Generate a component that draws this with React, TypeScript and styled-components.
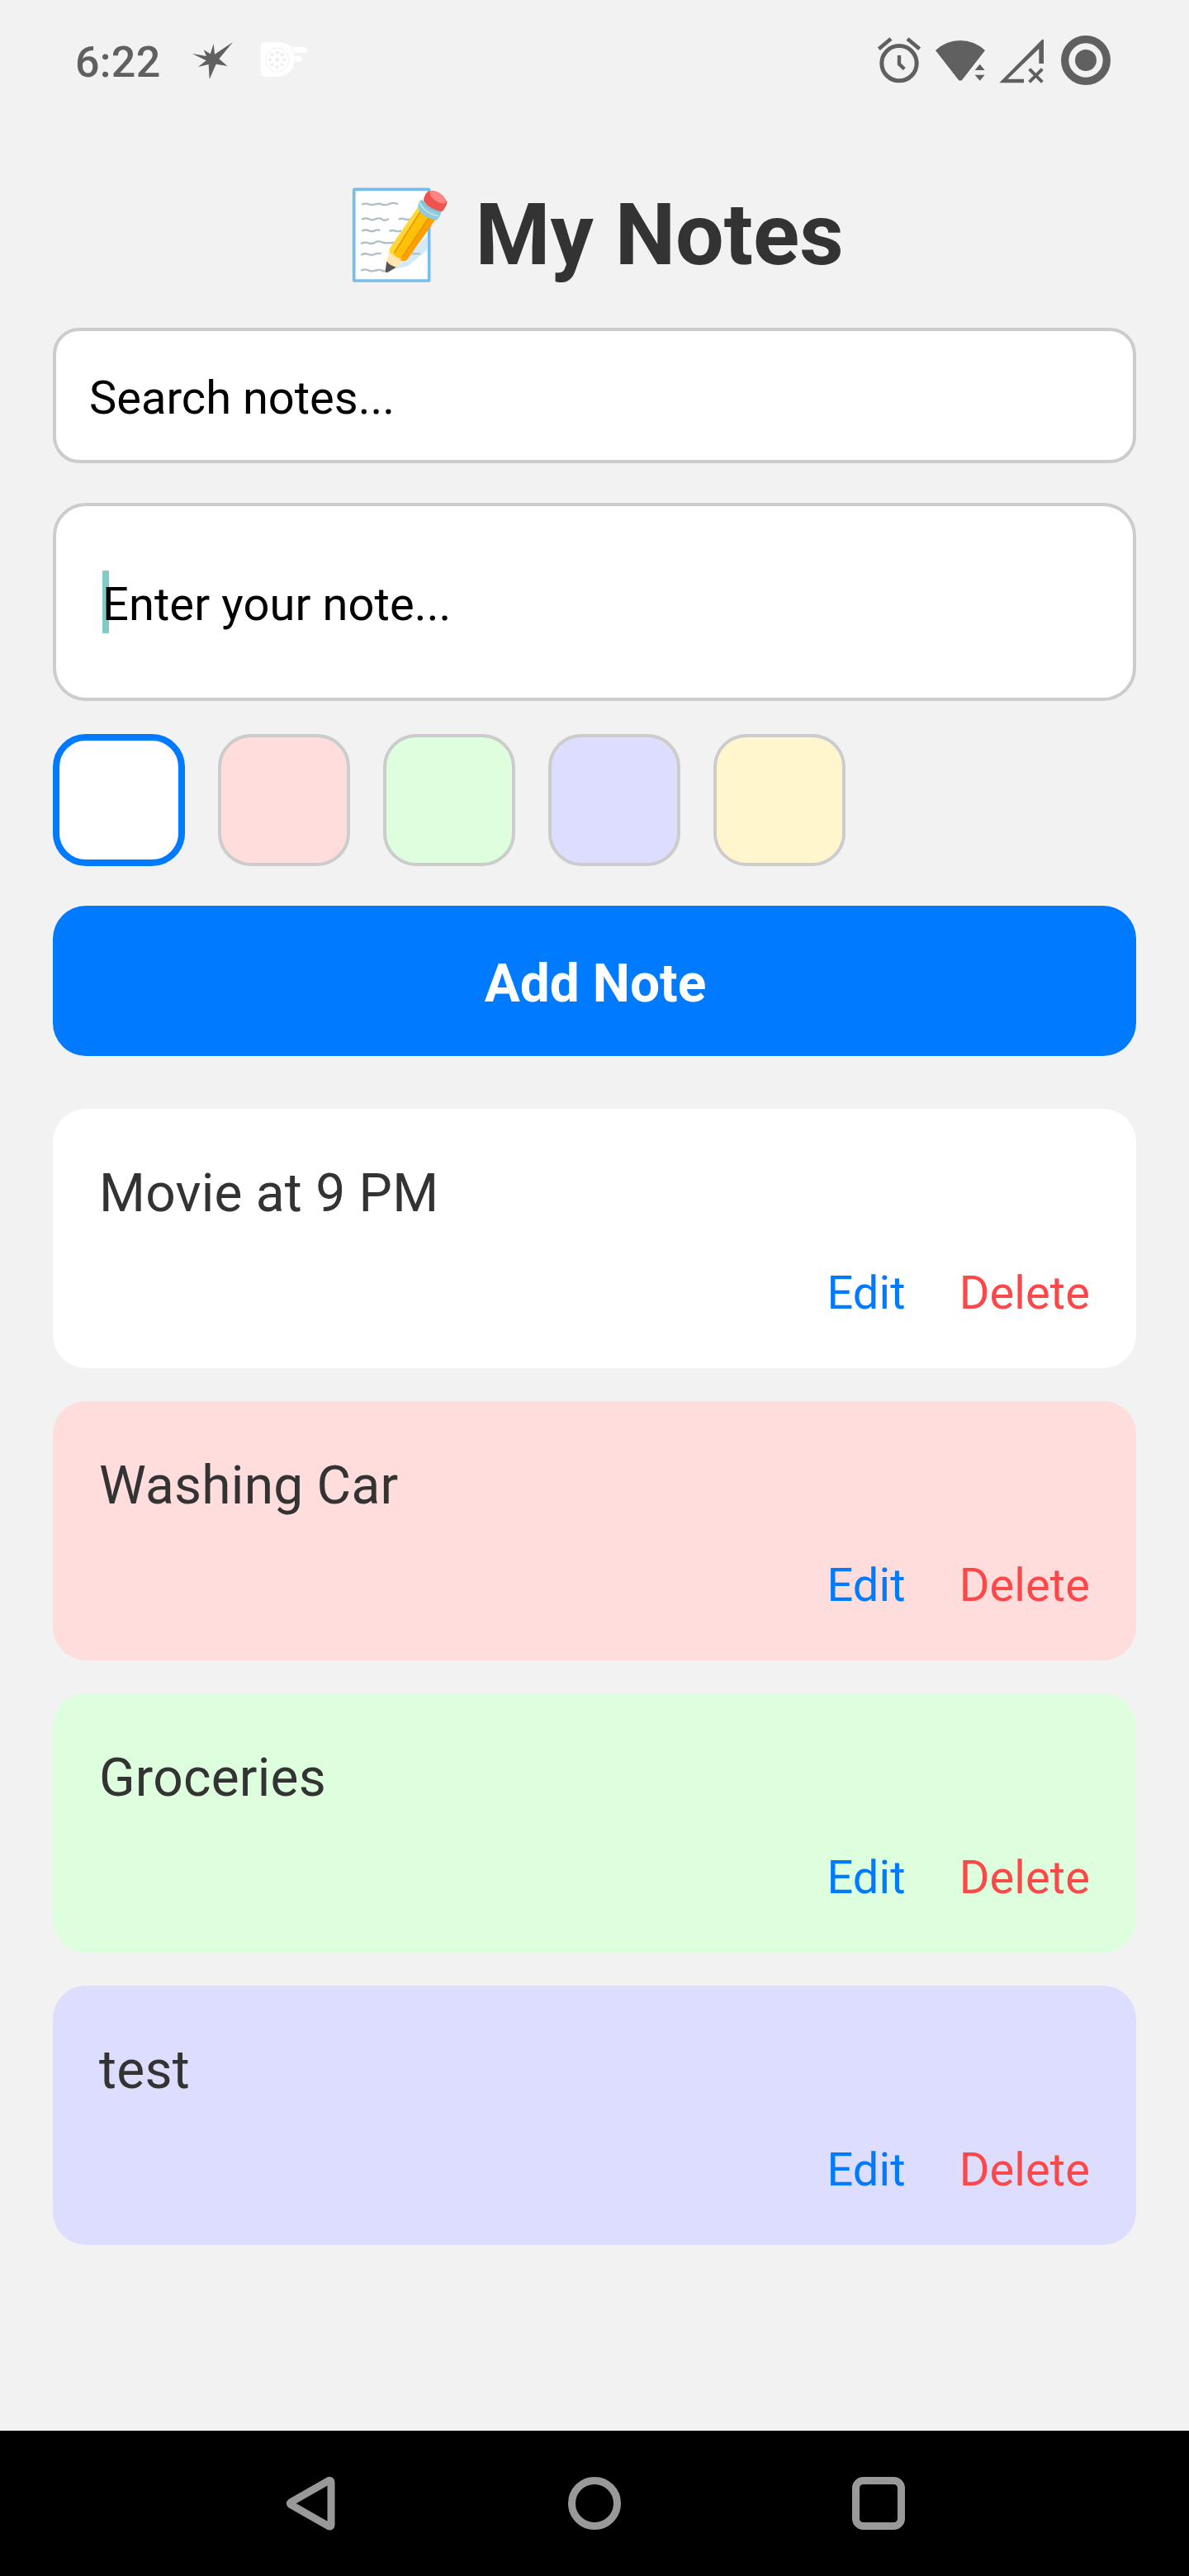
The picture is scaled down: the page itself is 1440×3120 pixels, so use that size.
import React from "react";
import styled, { createGlobalStyle } from "styled-components";

const GlobalStyle = createGlobalStyle`
  *, *::before, *::after { box-sizing: border-box; }
  body { margin: 0; background: #f2f2f2; }
`;

const ICON = "#606060";

const Screen = styled.div`
  display: flex;
  flex-direction: column;
  width: 1440px;
  height: 3120px;
  background: #f2f2f2;
  font-family: Roboto, "Noto Sans", sans-serif;
  overflow: hidden;
`;

const StatusBar = styled.header`
  display: flex;
  align-items: center;
  justify-content: space-between;
  height: 146px;
  padding: 0 94px 0 91px;
  flex: none;
`;

const StatusGroup = styled.div<{ $gap: number }>`
  display: flex;
  align-items: center;
  gap: ${(p) => p.$gap}px;
`;

const Clock = styled.span`
  width: 109px;
  padding-top: 6px;
  font-size: 52px;
  font-weight: 500;
  line-height: 62px;
  letter-spacing: 0.3px;
  color: ${ICON};
  white-space: nowrap;
`;

const Glyph = styled.svg<{ $w: number; $h?: number }>`
  display: block;
  flex: none;
  width: ${(p) => p.$w}px;
  height: ${(p) => p.$h ?? 62}px;
`;

const Body = styled.main`
  display: flex;
  flex-direction: column;
  flex: 1;
  padding: 81px 64px 0;
`;

const Title = styled.h1`
  display: flex;
  align-items: center;
  justify-content: center;
  gap: 33px;
  height: 116px;
  margin: 0 0 54px;
  padding-left: 8px;
  font-size: 104px;
  font-weight: 700;
  line-height: 116px;
  color: #333;
  white-space: nowrap;
`;

const Form = styled.section`
  display: flex;
  flex-direction: column;
  gap: 48px;
`;

const Field = styled.div<{ $height: number; $radius: number; $inset: number }>`
  display: flex;
  align-items: center;
  height: ${(p) => p.$height}px;
  padding: 5px ${(p) => p.$inset}px 0;
  border: 4px solid #ccc;
  border-radius: ${(p) => p.$radius}px;
  background: #fff;
  font-size: 56px;
  line-height: 76px;
  color: #000;
`;

const Placeholder = styled.span`
  position: relative;
  white-space: nowrap;
`;

const Caret = styled.i`
  position: absolute;
  left: 0;
  top: -3px;
  width: 8px;
  height: 76px;
  background: #80cbc4;
`;

const CaretText = styled.span`
  position: relative;
  letter-spacing: 0.1px;
`;

const Swatches = styled.div`
  display: flex;
  gap: 40px;
  margin-top: -8px;
`;

const Swatch = styled.button<{ $color: string; $active?: boolean }>`
  width: 160px;
  height: 160px;
  padding: 0;
  border: ${(p) => (p.$active ? "8px solid #007bff" : "4px solid #ccc")};
  border-radius: 40px;
  background: ${(p) => p.$color};
`;

const AddButton = styled.button`
  height: 182px;
  padding: 8px 0 0 2px;
  border: 0;
  border-radius: 40px;
  background: #007bff;
  color: #fff;
  font-family: inherit;
  font-size: 64px;
  font-weight: 700;
  line-height: 86px;
`;

const List = styled.ul`
  display: flex;
  flex-direction: column;
  gap: 40px;
  margin: 64px 0 0;
  padding: 0;
  list-style: none;
`;

const Card = styled.li<{ $color: string }>`
  display: flex;
  flex-direction: column;
  height: 314px;
  padding: 60px 56px 0;
  border-radius: 40px;
  background: ${(p) => p.$color};
`;

const NoteText = styled.p`
  margin: 0;
  font-size: 64px;
  line-height: 86px;
  letter-spacing: 0.25px;
  color: #333;
`;

const Actions = styled.div`
  display: flex;
  justify-content: flex-end;
  gap: 65px;
  margin-top: 40px;
`;

const Action = styled.button<{ $color: string }>`
  padding: 0;
  border: 0;
  background: none;
  font-family: inherit;
  font-size: 56px;
  line-height: 74px;
  letter-spacing: 0.1px;
  color: ${(p) => p.$color};
`;

const NavBar = styled.nav`
  display: flex;
  align-items: center;
  justify-content: center;
  gap: 280px;
  height: 176px;
  padding-right: 1px;
  flex: none;
  background: #000;
`;

const StarIcon = () => (
  <Glyph $w={51} viewBox="516 66 153 186">
    <path
      fill={ICON}
      d="M518 135 L570 144 L560 121 L584 136 L596 99 L600 137 L666 93 L616 154 L646 180 L605 173 L581 228 L578 174 L540 183 L569 160 Z"
    />
  </Glyph>
);

const ReelIcon = () => {
  const dots = Array.from({ length: 8 }, (_, i) => (i * Math.PI) / 4);
  return (
    <Glyph $w={58} viewBox="762 66 174 186">
      <path
        fill="#fff"
        d="M780 93 H822 Q858 94 877 111 H923 Q933 112 933 122 Q933 132 923 132 H885 Q888 143 888 143 H905 Q915 145 915 154 Q915 164 905 165 H887 Q884 190 868 203 Q848 219 822 219 H780 Q765 219 765 204 V108 Q765 93 780 93 Z"
      />
      <path fill="none" stroke="#f2f2f2" strokeWidth="3" d="M878 111 Q890 130 889 165" />
      <circle cx="824" cy="157" r="43" fill="none" stroke="#efefef" strokeWidth="3" />
      <circle cx="824" cy="157" r="8" fill="#efefef" />
      {dots.map((a) => (
        <circle key={a} cx={824 + 26 * Math.cos(a)} cy={157 + 26 * Math.sin(a)} r="6.5" fill="#efefef" />
      ))}
    </Glyph>
  );
};

const AlarmIcon = () => (
  <Glyph $w={54} viewBox="96 66 162 186">
    <g fill="none" stroke={ICON}>
      <circle cx="177" cy="170" r="63.5" strokeWidth="15" />
      <path strokeWidth="13" d="M177 141 V173 L196 191" />
      <path strokeWidth="14" d="M103 118 L147 81 M207 81 L251 118" />
    </g>
  </Glyph>
);

const WifiIcon = () => (
  <Glyph $w={62} viewBox="306 66 186 186">
    <path
      fill={ICON}
      d="M309 123 Q348 87 399 87 Q450 87 489 123 L405 231 Q399 236 393 231 Z M452 195 L470 173 L488 195 Z M452 212 H488 L470 233 Z"
    />
  </Glyph>
);

const SignalIcon = () => (
  <Glyph $w={58} viewBox="540 66 174 186">
    <path
      fill={ICON}
      fillRule="evenodd"
      d="M541 241 L696 84 Q702 81 702 87 V171 H685 V117 L571 227 H630 V241 Z"
    />
    <path fill="none" stroke={ICON} strokeWidth="12" d="M650 191 L697 238 M697 191 L650 238" />
  </Glyph>
);

const RecordIcon = () => (
  <Glyph $w={62} viewBox="762 66 186 186">
    <circle cx="855" cy="159" r="76" fill="none" stroke={ICON} strokeWidth="28" />
    <circle cx="855" cy="159" r="39" fill={ICON} />
  </Glyph>
);

const MemoIcon = () => (
  <Glyph $w={116} $h={116} viewBox="36 36 348 348">
    <rect x="44" y="43" width="273" height="332" rx="2" fill="#fff" stroke="#78bdec" strokeWidth="11" />
    <path fill="#d3eaf8" d="M312 208 L312 262 L240 322 L180 336 L230 300 Z" />
    <g fill="none" stroke="#b0bec5" strokeWidth="7" strokeLinecap="round">
      <path d="M75 97 Q87 93 98 97 T122 97 T146 98 T172 96 T202 96" />
      <path d="M75 151 Q87 145 98 151 T122 151 T146 152 T168 151 M209 151 Q218 147 228 151 T250 151" />
      <path d="M75 193 Q87 188 98 193 T120 193 T136 192 M175 194 Q184 190 194 194 T214 194" />
      <path d="M72 239 Q84 233 96 238 T120 236 T146 235 T196 236" />
      <path d="M72 280 Q84 274 96 279 T118 279 T140 276 M256 277 H282" />
      <path d="M72 337 Q84 331 96 337 T122 338 T146 338 T164 338" />
    </g>
    <path fill="#ffe6b0" d="M173 268 L221 303 L196 327 L160 344 L163 306 Z" />
    <path fill="#545454" d="M163 304 Q170 318 197 326 L170 343 Q158 348 158 338 Z" />
    <path fill="#fdd835" d="M276 108 L296 120 L200 288 Q182 282 173 270 Q171 264 175 256 Z" />
    <path fill="#ffc107" d="M290 116 L322 138 L222 302 Q210 300 209 291 Q197 296 189 274 Z" />
    <path fill="#ffa000" d="M319 134 L342 150 L238 298 Q228 308 215 301 Z" />
    <path fill="none" stroke="#e8950c" strokeWidth="5" d="M287 121 L190 274 M320 142 L218 290" />
    <path
      fill="#8fcbdc"
      d="M289 80 Q278 88 276 108 Q286 136 318 148 Q332 156 344 155 Q358 144 362 122 Z"
    />
    <path fill="none" stroke="#bfe3ec" strokeWidth="5" d="M283 92 Q298 128 350 140" />
    <path fill="none" stroke="#6fb3c8" strokeWidth="3" d="M289 85 Q308 114 358 126" />
    <path fill="#ef5350" d="M318 49 Q300 56 297 84 Q318 116 364 124 Q380 108 382 88 Q364 54 318 49 Z" />
    <ellipse cx="349" cy="71" rx="34" ry="16" transform="rotate(35 349 71)" fill="#fb8580" />
  </Glyph>
);

const BackIcon = () => (
  <Glyph $w={64} $h={66} viewBox="41 56 192 198">
    <path
      fill="none"
      stroke="#999"
      strokeWidth="27"
      strokeLinejoin="round"
      d="M204 72 Q212 70 212 80 V232 Q212 241 203 238 L66 160 Q60 156 66 151 Z"
    />
  </Glyph>
);

const HomeIcon = () => (
  <Glyph $w={64} $h={64} viewBox="0 0 64 64">
    <circle cx="32" cy="32" r="27.5" fill="none" stroke="#999" strokeWidth="9" />
  </Glyph>
);

const RecentsIcon = () => (
  <Glyph $w={64} $h={64} viewBox="0 0 64 64">
    <rect x="4.5" y="4.5" width="55" height="55" rx="9" fill="none" stroke="#999" strokeWidth="9" />
  </Glyph>
);

const colors = ["#ffffff", "#ffdddd", "#ddffdd", "#ddddff", "#fff6cd"];

const notes = [
  { text: "Movie at 9 PM", color: colors[0] },
  { text: "Washing Car", color: colors[1] },
  { text: "Groceries", color: colors[2] },
  { text: "test", color: colors[3] },
];

export default function App() {
  return (
    <Screen>
      <GlobalStyle />
      <StatusBar>
        <StatusGroup $gap={32}>
          <Clock>6:22</Clock>
          <StarIcon />
          <ReelIcon />
        </StatusGroup>
        <StatusGroup $gap={16}>
          <AlarmIcon />
          <WifiIcon />
          <SignalIcon />
          <RecordIcon />
        </StatusGroup>
      </StatusBar>
      <Body>
        <Title>
          <MemoIcon />
          <span>My Notes</span>
        </Title>
        <Form>
          <Field $height={164} $radius={32} $inset={40}>
            <Placeholder>Search notes...</Placeholder>
          </Field>
          <Field $height={240} $radius={40} $inset={56}>
            <Placeholder>
              <Caret />
              <CaretText>Enter your note...</CaretText>
            </Placeholder>
          </Field>
          <Swatches>
            {colors.map((c, i) => (
              <Swatch key={c} $color={c} $active={i === 0} aria-label={`Color ${i + 1}`} />
            ))}
          </Swatches>
          <AddButton>Add Note</AddButton>
        </Form>
        <List>
          {notes.map((n) => (
            <Card key={n.text} $color={n.color}>
              <NoteText>{n.text}</NoteText>
              <Actions>
                <Action $color="#007bff">Edit</Action>
                <Action $color="#fc4848">Delete</Action>
              </Actions>
            </Card>
          ))}
        </List>
      </Body>
      <NavBar>
        <BackIcon />
        <HomeIcon />
        <RecentsIcon />
      </NavBar>
    </Screen>
  );
}
